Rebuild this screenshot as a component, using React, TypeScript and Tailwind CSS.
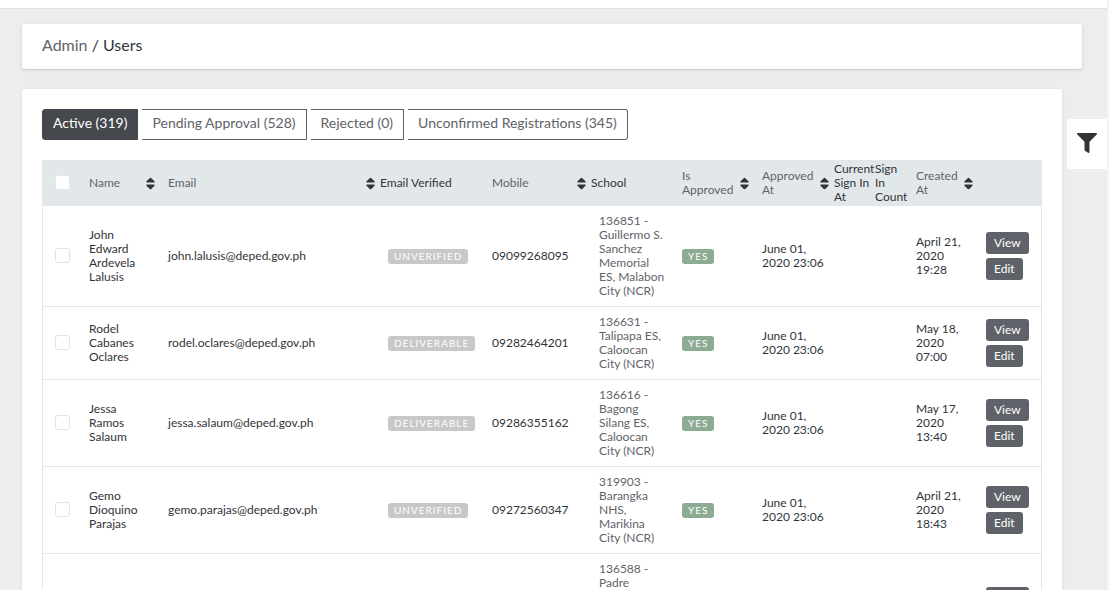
import { FaFilter, FaSort } from "react-icons/fa";

type User = {
  name: string;
  email: string;
  status: string;
  mobile: string;
  school: string;
  approved: string;
  approvedAt: string;
  createdAt: string;
};

const users: User[] = [
  { name: "John Edward Ardevela Lalusis", email: "john.lalusis@deped.gov.ph", status: "Unverified", mobile: "09099268095", school: "136851 - Guillermo S. Sanchez Memorial ES, Malabon City (NCR)", approved: "Yes", approvedAt: "June 01, 2020 23:06", createdAt: "April 21, 2020 19:28" },
  { name: "Rodel Cabanes Oclares", email: "rodel.oclares@deped.gov.ph", status: "Deliverable", mobile: "09282464201", school: "136631 - Talipapa ES, Caloocan City (NCR)", approved: "Yes", approvedAt: "June 01, 2020 23:06", createdAt: "May 18, 2020 07:00" },
  { name: "Jessa Ramos Salaum", email: "jessa.salaum@deped.gov.ph", status: "Deliverable", mobile: "09286355162", school: "136616 - Bagong Silang ES, Caloocan City (NCR)", approved: "Yes", approvedAt: "June 01, 2020 23:06", createdAt: "May 17, 2020 13:40" },
  { name: "Gemo Dioquino Parajas", email: "gemo.parajas@deped.gov.ph", status: "Unverified", mobile: "09272560347", school: "319903 - Barangka NHS, Marikina City (NCR)", approved: "Yes", approvedAt: "June 01, 2020 23:06", createdAt: "April 21, 2020 18:43" },
  { name: "", email: "", status: "", mobile: "", school: "136588 - Padre", approved: "", approvedAt: "", createdAt: "" },
];

const columns = [
  { label: "Name", sortable: true, width: "w-[79px]" },
  { label: "Email", sortable: true, width: "w-[220px]" },
  { label: "Email Verified", sortable: false, width: "w-[104px]" },
  { label: "Mobile", sortable: true, width: "w-[107px]" },
  { label: "School", sortable: false, width: "w-[83px]" },
  { label: "Is Approved", sortable: true, width: "w-[80px]" },
  { label: "Approved At", sortable: true, width: "w-[80px]" },
  { label: "Current Sign In At", sortable: false, width: "w-[41px]" },
  { label: "Sign In Count", sortable: false, width: "w-[33px]" },
  { label: "Created At", sortable: true, width: "w-[70px]" },
];

const tabs = [
  { label: "Active (319)", style: "rounded-l-[3px] border-l border-[#45484d] bg-[#45484d] text-white" },
  { label: "Pending Approval (528)", style: "border-[#5f6369] text-[#5f6369]" },
  { label: "Rejected (0)", style: "border-[#5f6369] text-[#5f6369]" },
  { label: "Unconfirmed Registrations (345)", style: "rounded-r-[3px] border-[#5f6369] text-[#5f6369]" },
];

function Tick({ label, head }: { label: string; head?: boolean }) {
  return (
    <input
      type="checkbox"
      aria-label={label}
      className={`mx-auto mb-[2px] block size-[15px] appearance-none rounded-[3px] border bg-white checked:bg-[#45484d] ${head ? "border-[#e4e9ec]" : "border-[#e2e2e2]"}`}
    />
  );
}

function Badge({ text, tone }: { text: string; tone: string }) {
  return (
    <span className={`inline-block rounded-[3px] px-[6px] align-middle text-[10px] leading-[15px] tracking-[1px] whitespace-nowrap text-white uppercase ${tone}`}>
      {text}
    </span>
  );
}

function Actions() {
  return (
    <div className="flex flex-col items-start gap-1">
      {["View", "Edit"].map((action) => (
        <a key={action} href="#" className="rounded-[3px] bg-[#5f6369] px-2 text-[12px] leading-[22px] text-white">
          {action}
        </a>
      ))}
    </div>
  );
}

function UserRow({ user }: { user: User }) {
  return (
    <tr className="*:border-b *:border-[#e2e7ea]">
      <td className="border-l"><Tick label={`Select ${user.name}`} /></td>
      <td className="p-2">{user.name}</td>
      <td className="p-2">{user.email}</td>
      <td className="p-2">{user.status && <Badge text={user.status} tone="bg-[#c8c8c8]" />}</td>
      <td className="p-2">{user.mobile}</td>
      <td className={user.name ? "p-2" : "h-[115px] p-2 align-top"}>
        <a href="#" className="text-[#5f6369]">{user.school}</a>
      </td>
      <td className="p-2">{user.approved && <Badge text={user.approved} tone="bg-[#8dab92]" />}</td>
      <td className="p-2">{user.approvedAt}</td>
      <td />
      <td />
      <td className="p-2">{user.createdAt}</td>
      <td className="border-r px-2"><Actions /></td>
    </tr>
  );
}

export default function App() {
  return (
    <div className="flex h-screen overflow-hidden bg-[#ededed] font-['Lato',sans-serif] text-[#313439]">
      <div className="flex min-w-0 flex-1 flex-col">
        <div className="h-[9px] shrink-0 border-b border-[#e0e0e0] bg-white" />
        <nav aria-label="Breadcrumb" className="mt-[15px] mr-[25px] ml-[22px] shrink-0 rounded-[3px] bg-white px-5 pt-2 pb-3 text-[16px] leading-[25px] shadow-[0_1px_3px_rgba(0,0,0,0.16)]">
          <a href="#" className="text-[#5f6369]">Admin</a> / <span>Users</span>
        </nav>
        <div className="mt-5 ml-[22px] flex items-start gap-[5px]">
          <main className="min-w-0 flex-1 rounded-[3px] bg-white p-5 shadow-[0_1px_3px_rgba(0,0,0,0.1)]">
            <div className="flex gap-1">
              {tabs.map((tab) => (
                <a key={tab.label} href="#" className={`border-y border-r px-[10px] pt-[2px] pb-[6px] text-[14px] leading-[21px] whitespace-nowrap ${tab.style}`}>
                  {tab.label}
                </a>
              ))}
            </div>
            <table className="mt-5 w-full table-fixed border-separate border-spacing-0 text-[12px] leading-[14px]">
              <colgroup>
                <col className="w-[39px]" />
                {columns.map((column) => <col key={column.label} className={column.width} />)}
                <col className="w-[64px]" />
              </colgroup>
              <thead className="bg-[#e2e8ea] text-left">
                <tr>
                  <th className="h-[46px] p-0 pl-px"><Tick label="Select all users" head /></th>
                  {columns.map((column) => (
                    <th key={column.label} className="p-0 font-normal">
                      {column.sortable ? (
                        <div className="flex items-center justify-between pr-[2px] pl-2">
                          <a href="#" className="text-[#5f6369]">{column.label}</a>
                          <FaSort className="size-[15px] shrink-0" />
                        </div>
                      ) : column.label}
                    </th>
                  ))}
                  <th aria-label="Actions" />
                </tr>
              </thead>
              <tbody>
                {users.map((user) => <UserRow key={user.school} user={user} />)}
              </tbody>
            </table>
          </main>
          <button type="button" aria-label="Filter users" className="mt-[30px] flex h-[50px] w-10 shrink-0 items-center justify-center rounded-l-[3px] bg-white pb-[2px]">
            <FaFilter className="size-5" />
          </button>
        </div>
      </div>
      <div className="w-[2px] shrink-0 bg-[#f4f4f4]" />
    </div>
  );
}
